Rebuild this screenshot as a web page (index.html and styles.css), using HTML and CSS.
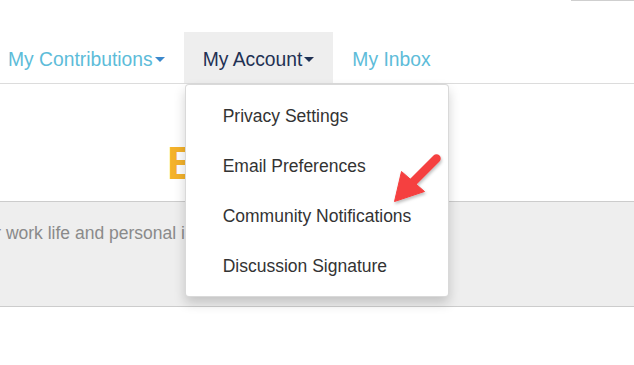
FILE: index.html
```html
<!DOCTYPE html>
<html lang="en">
<head>
  <meta charset="UTF-8">
  <meta name="viewport" content="width=device-width, initial-scale=1.0">
  <title>My Account</title>
  <link rel="stylesheet" href="styles.css">
</head>
<body>

<div class="topbar">
  <span class="search-edge"></span>
</div>

<ul class="nav-tabs">
  <li class="tab first"><a href="#">My Contributions<span class="caret"></span></a></li>
  <li class="tab active">
    <a href="#">My Account<span class="caret"></span></a>
    <ul class="dropdown">
      <li><a href="#">Privacy Settings</a></li>
      <li><a href="#">Email Preferences</a></li>
      <li><a href="#">Community Notifications</a></li>
      <li><a href="#">Discussion Signature</a></li>
    </ul>
  </li>
  <li class="tab"><a href="#">My Inbox</a></li>
</ul>

<h1 class="page-title">Bio</h1>

<div class="bio-band">
  <p>your work life and personal interests</p>
</div>

<svg class="pointer" width="60" height="60" viewBox="0 0 60 60">
  <defs>
    <filter id="soft" x="-20%" y="-20%" width="140%" height="140%">
      <feDropShadow dx="1" dy="2" stdDeviation="1.5" flood-color="#000" flood-opacity="0.25"/>
    </filter>
  </defs>
  <g filter="url(#soft)" fill="#f5403f" stroke="#f5403f">
    <line x1="51.5" y1="8.5" x2="28" y2="32" stroke-width="8.5" stroke-linecap="round"/>
    <polygon points="16.5,21.5 39.5,41.5 9.5,51.5" stroke-width="1" stroke-linejoin="round"/>
  </g>
</svg>

</body>
</html>
```

FILE: styles.css
```css
body {
  font-family: "Liberation Sans", Arial, sans-serif;
  margin: 0;
  background: #fff;
  overflow: hidden;
  height: 365px;
}

a {
  text-decoration: none;
}

.topbar {
  display: flex;
  justify-content: flex-end;
  height: 32px;
}

.search-edge {
  width: 63px;
  height: 0;
  border-top: 1px solid #cfcfcf;
}

.nav-tabs {
  list-style: none;
  margin: 0;
  padding: 0;
  display: flex;
  border-bottom: 1px solid #dcdcdc;
}

.tab {
  position: relative;
  height: 51px;
}

.tab > a {
  display: block;
  padding: 4px 19px 0;
  line-height: 47px;
  font-size: 19.3px;
  color: #5dbcd9;
}

.tab.first > a {
  padding-left: 8px;
}

.tab.active {
  background: #eeeeee;
}

.tab.active > a {
  color: #1f3154;
}

.caret {
  display: inline-block;
  width: 0;
  height: 0;
  margin-left: 2px;
  vertical-align: 4px;
  border-left: 5px solid transparent;
  border-right: 5px solid transparent;
  border-top: 5px solid #3b88cc;
}

.tab.active .caret {
  border-top-color: #1f3154;
}

.dropdown {
  position: absolute;
  top: 52px;
  left: 1px;
  width: 262px;
  margin: 0;
  padding: 6px 0 5px;
  list-style: none;
  background: #fff;
  border: 1px solid rgba(0, 0, 0, 0.15);
  border-radius: 4px;
  box-shadow: 0 6px 12px rgba(0, 0, 0, 0.18);
  z-index: 5;
}

.dropdown a {
  display: block;
  padding-left: 37px;
  line-height: 50px;
  font-size: 17.5px;
  color: #333;
  white-space: nowrap;
}

.page-title {
  margin: 53px 0 11px;
  padding-left: 167px;
  font-size: 46px;
  line-height: 53px;
  font-weight: bold;
  color: #f4b22b;
}

.bio-band {
  height: 106px;
  box-sizing: border-box;
  background: #eeeeee;
  border-top: 1px solid #cccccc;
  border-bottom: 1px solid #cccccc;
  padding-top: 19px;
}

.bio-band p {
  margin: 0 0 0 -33px;
  font-size: 17.5px;
  line-height: 24px;
  color: #8a8a8a;
  white-space: nowrap;
}

.pointer {
  position: absolute;
  left: 385px;
  top: 150px;
  z-index: 6;
}
```
